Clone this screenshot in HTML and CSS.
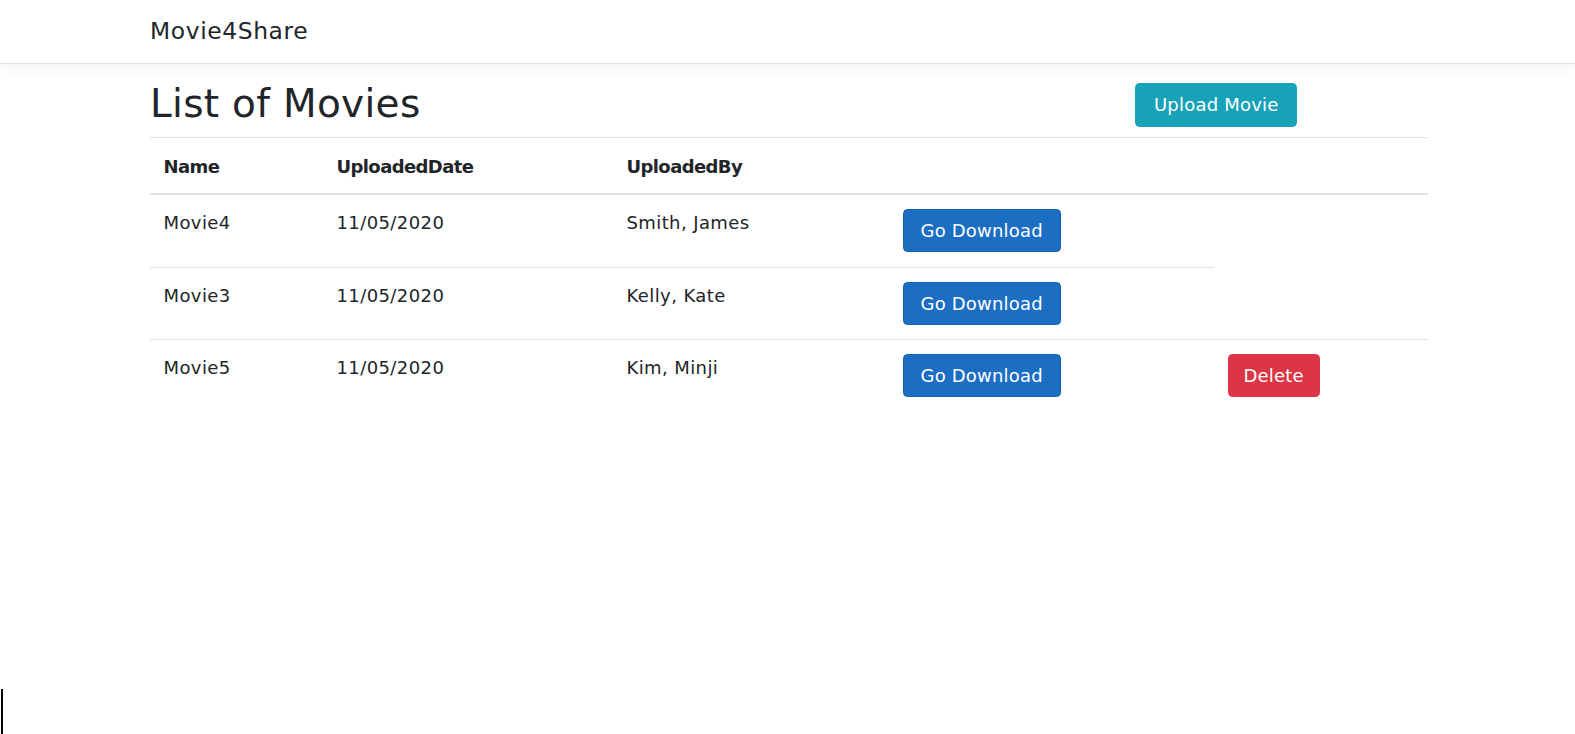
FILE: index.html
```html
<!DOCTYPE html>
<html lang="en">
<head>
<meta charset="utf-8">
<title>Movie4Share</title>
<link rel="stylesheet" href="styles.css">
</head>
<body>
<header class="navbar">
  <div class="container">
    <a class="brand" href="#">Movie4Share</a>
  </div>
</header>
<main class="container">
  <div class="page-head">
    <h1>List of Movies</h1>
    <div><button class="btn btn-info">Upload Movie</button></div>
  </div>
  <table class="table">
    <colgroup>
      <col class="c1"><col class="c2"><col class="c3"><col class="c4"><col class="c5">
    </colgroup>
    <thead>
      <tr><th>Name</th><th>UploadedDate</th><th>UploadedBy</th><th></th><th></th></tr>
    </thead>
    <tbody>
      <tr><td>Movie4</td><td>11/05/2020</td><td>Smith, James</td><td><button class="btn btn-primary">Go Download</button></td></tr>
      <tr><td>Movie3</td><td>11/05/2020</td><td>Kelly, Kate</td><td><button class="btn btn-primary">Go Download</button></td></tr>
      <tr><td>Movie5</td><td>11/05/2020</td><td>Kim, Minji</td><td><button class="btn btn-primary">Go Download</button></td><td><button class="btn btn-danger">Delete</button></td></tr>
    </tbody>
  </table>
</main>
<div class="caret"></div>
</body>
</html>
```
FILE: styles.css
```css
* { box-sizing: border-box; }
html, body { margin: 0; padding: 0; }
body {
  font-family: "DejaVu Sans", "Liberation Sans", sans-serif;
  font-size: 18px;
  line-height: 27px;
  color: #212529;
  background: #fff;
  min-height: 734px;
}
.container {
  width: 1278px;
  margin-left: 150px;
}
.navbar {
  height: 64px;
  border-bottom: 1px solid #e5e5e5;
  box-shadow: 0 4px 13px rgba(0, 0, 0, 0.05);
  margin-bottom: 16px;
  display: flex;
  align-items: center;
}
.brand {
  font-size: 23.4px;
  line-height: 34px;
  letter-spacing: 0.6px;
  color: #212529;
  text-decoration: none;
  display: block;
  padding-bottom: 1px;
}
.page-head {
  display: grid;
  grid-template-columns: 985px auto;
  align-items: start;
}
h1 {
  margin: 0 0 10px;
  font-size: 39px;
  line-height: 47px;
  font-weight: 400;
  letter-spacing: 0.3px;
}
.btn {
  font-family: inherit;
  font-size: 18px;
  line-height: 27px;
  padding: 7px 17px;
  border: 1px solid transparent;
  border-radius: 4.5px;
  color: #fff;
  cursor: pointer;
  letter-spacing: 0.2px;
}
.btn-info { background: #17a2b8; border-color: #17a2b8; margin-top: 3px; padding: 7px 18px 8px; }
.btn-primary { background: #1b6ec2; border-color: #1861ac; }
.btn-danger { background: #dc3545; border-color: #dc3545; padding: 7px 15px; }
.table {
  width: 1278px;
  border-collapse: collapse;
  table-layout: fixed;
}
.c1 { width: 173px; }
.c2 { width: 290px; }
.c3 { width: 276px; }
.c4 { width: 325px; }
.c5 { width: 214px; }
th, td {
  text-align: left;
  vertical-align: top;
  padding: 13.5px;
  border-top: 1px solid #dee2e6;
}
th {
  font-weight: 700;
  letter-spacing: -0.6px;
  padding-top: 15px;
  padding-bottom: 13px;
  border-bottom: 2px solid #dee2e6;
}
td { letter-spacing: 0.4px; padding-top: 14px; padding-bottom: 14.5px; }
.caret {
  position: absolute;
  left: 1px;
  top: 689px;
  width: 2px;
  height: 45px;
  background: #000;
}
```
